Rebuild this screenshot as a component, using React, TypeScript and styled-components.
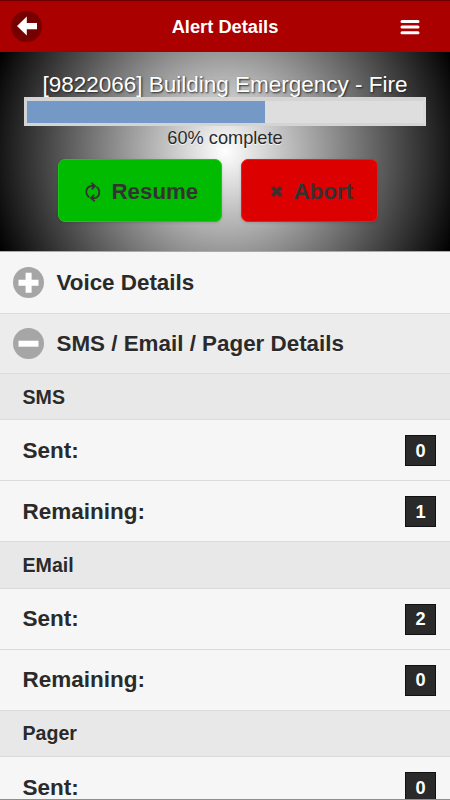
import React from "react";
import styled, { createGlobalStyle } from "styled-components";

const GlobalStyle = createGlobalStyle`
  *, *::before, *::after { box-sizing: border-box; }
  html, body { margin: 0; padding: 0; overflow: hidden; }
  body { font-family: "Liberation Sans", Arial, sans-serif; }
`;

const Screen = styled.main`
  display: flex;
  flex-direction: column;
  width: 450px;
  height: 800px;
  overflow: hidden;
  background: #f6f6f6;
  border-bottom: 1px solid #8e8e8e;
  color: #2a2a2a;
`;

const Header = styled.header`
  flex: none;
  display: grid;
  grid-template-columns: 52px 1fr 52px;
  align-items: center;
  height: 52px;
  padding-top: 1px;
  background: #aa0000;
  border-top: 1px solid #6b0000;
  border-bottom: 1px solid #7d1010;
`;

const Title = styled.h1`
  margin: 0;
  padding-top: 1px;
  text-align: center;
  font-size: 18.3px;
  line-height: 24px;
  color: #fff;
`;

const BackButton = styled.button`
  display: flex;
  width: 31px;
  height: 31px;
  margin: 0 0 0 11px;
  padding: 0;
  border: 0;
  border-radius: 50%;
  background: #760000;
`;

const MenuButton = styled.button`
  display: flex;
  width: 22px;
  height: 16px;
  margin: 0 0 0 1px;
  padding: 0;
  border: 0;
  background: transparent;
`;

const Hero = styled.section`
  flex: none;
  display: flex;
  flex-direction: column;
  align-items: center;
  height: 200px;
  padding-top: 20px;
  background: radial-gradient(circle farthest-corner at 50% 50%, #fff, #000);
  border-bottom: 1px solid #aaa;
`;

const AlertName = styled.h2`
  margin: 0;
  height: 25px;
  font-size: 22.5px;
  font-weight: 400;
  line-height: 26px;
  white-space: nowrap;
  color: #fff;
  text-shadow: 1px 1px 2px #222;
`;

const ProgressTrack = styled.div`
  width: 402px;
  height: 29px;
  flex: none;
  border: 3px solid #d4d4d4;
  border-top-width: 4px;
  border-right-color: #dadada;
  background: #dedede;
`;

const ProgressFill = styled.div`
  width: 60%;
  height: 100%;
  background: #7499c7;
`;

const ProgressLabel = styled.p`
  margin: 1px 0 0;
  height: 32px;
  font-size: 18.2px;
  line-height: 22px;
  color: #2a2a2a;
  text-shadow: 0 1px 0 rgba(255, 255, 255, 0.8);
`;

const Actions = styled.div`
  display: flex;
  gap: 19px;
  margin-right: 15px;
`;

const ActionButton = styled.button<{ $kind: "resume" | "abort" }>`
  display: flex;
  align-items: center;
  width: ${({ $kind }) => ($kind === "resume" ? 164 : 137)}px;
  height: 63px;
  padding: 3px 0 0 ${({ $kind }) => ($kind === "resume" ? 25 : 26)}px;
  gap: ${({ $kind }) => ($kind === "resume" ? 10 : 8)}px;
  border: 1px solid ${({ $kind }) => ($kind === "resume" ? "#13cc13" : "#ed1b1b")};
  border-radius: 7px;
  background: ${({ $kind }) => ($kind === "resume" ? "#00bb00" : "#dd0000")};
  box-shadow: 0 1px 3px rgba(0, 0, 0, 0.15);
  font: bold 22.3px "Liberation Sans", Arial, sans-serif;
  color: #333;
`;

const CollapsibleHeading = styled.h3<{ $open?: boolean }>`
  flex: none;
  display: flex;
  align-items: center;
  gap: 13px;
  height: ${({ $open }) => ($open ? 60.5 : 61.5)}px;
  margin: 0;
  padding: 1px 12.5px 0;
  font-size: 22.4px;
  background: ${({ $open }) => ($open ? "#ececec" : "#f6f6f6")};
  border-bottom: 1px solid #dcdcdc;
  text-shadow: 0 1px 0 #f3f3f3;
`;

const List = styled.ul`
  margin: 0;
  padding: 0;
  list-style: none;
`;

const SectionRow = styled.li`
  display: flex;
  align-items: center;
  height: 46.4px;
  padding: 1px 23px 0 22.5px;
  font-size: 19.6px;
  font-weight: 700;
  background: #e8e8e8;
  border-bottom: 1px solid #dbdbdb;
  text-shadow: 0 1px 0 #eee;
`;

const CountRow = styled.li`
  display: flex;
  align-items: center;
  justify-content: space-between;
  height: 61px;
  padding: 1px 14px 0 22.5px;
  font-size: 22.5px;
  font-weight: 700;
  background: #f6f6f6;
  border-bottom: 1px solid #dbdbdb;
`;

const Count = styled.span`
  display: flex;
  align-items: center;
  justify-content: center;
  width: 31px;
  height: 31px;
  padding-top: 1px;
  background: #2a2a2a;
  border: 1px solid #111;
  font-size: 18.2px;
  color: #fff;
`;

const BackIcon = () => (
  <svg width="31" height="31" viewBox="0 0 31 31" aria-hidden="true">
    <path d="M6 15 L15.8 5.5 V12 H26 V18.2 H15.8 V24.5 Z" fill="#fff" />
  </svg>
);

const MenuIcon = () => (
  <svg width="22" height="16" viewBox="0 0 22 16" aria-hidden="true">
    <path d="M2.5 2.4H18.5M2.5 8.1H18.5M2.5 13.8H18.5" stroke="#fff" strokeWidth="3" strokeLinecap="round" transform="translate(0.5 0)" />
  </svg>
);

const RefreshIcon = () => (
  <svg width="18" height="22" viewBox="0 0 18 22" fill="none" stroke="#333" strokeWidth="1.8" aria-hidden="true">
    <path d="M5.3 16.2C1 13.3 1.2 6 7.4 5H10.8" />
    <path d="M7.2 1.8 11 5 7.8 8.3" />
    <path d="M12.4 5.8C16.8 8.8 16 16.4 10.5 17H7" />
    <path d="M10.2 13.7 7 17 10.8 20.2" />
  </svg>
);

const CrossIcon = () => (
  <svg width="18" height="18" viewBox="0 0 18 18" aria-hidden="true">
    <path d="M4.3 4.3 13.1 12.9M13.1 4.3 4.3 12.9" stroke="#333" strokeWidth="3.7" />
  </svg>
);

const ToggleIcon = ({ open }: { open?: boolean }) => (
  <svg width="31" height="31" viewBox="0 0 31 31" aria-hidden="true">
    <circle cx="15.5" cy="15.5" r="15.5" fill="#a6a6a6" />
    <path d={open ? "M5.5 15.7H25.5" : "M5.5 15.7H25.5M15.6 5.7V25.7"} stroke="#fff" strokeWidth="6" />
  </svg>
);

const sections = [
  { name: "SMS", rows: [["Sent:", 0], ["Remaining:", 1]] },
  { name: "EMail", rows: [["Sent:", 2], ["Remaining:", 0]] },
  { name: "Pager", rows: [["Sent:", 0]] },
];

export default function App() {
  return (
    <Screen>
      <GlobalStyle />
      <Header>
        <BackButton aria-label="Back"><BackIcon /></BackButton>
        <Title>Alert Details</Title>
        <MenuButton aria-label="Menu"><MenuIcon /></MenuButton>
      </Header>
      <Hero>
        <AlertName>[9822066] Building Emergency - Fire</AlertName>
        <ProgressTrack><ProgressFill /></ProgressTrack>
        <ProgressLabel>60% complete</ProgressLabel>
        <Actions>
          <ActionButton $kind="resume"><RefreshIcon />Resume</ActionButton>
          <ActionButton $kind="abort"><CrossIcon />Abort</ActionButton>
        </Actions>
      </Hero>
      <CollapsibleHeading><ToggleIcon />Voice Details</CollapsibleHeading>
      <CollapsibleHeading $open><ToggleIcon open />SMS / Email / Pager Details</CollapsibleHeading>
      <List>
        {sections.map((section) => (
          <React.Fragment key={section.name}>
            <SectionRow>{section.name}</SectionRow>
            {section.rows.map(([label, value]) => (
              <CountRow key={label}>{label}<Count>{value}</Count></CountRow>
            ))}
          </React.Fragment>
        ))}
      </List>
    </Screen>
  );
}
